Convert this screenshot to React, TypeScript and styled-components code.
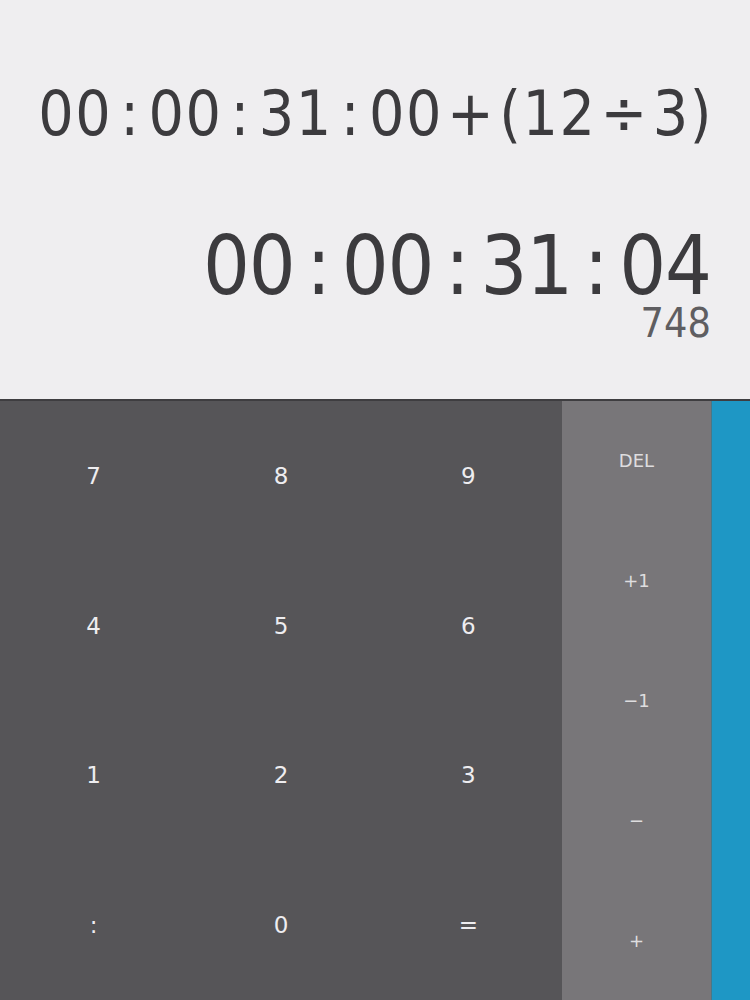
import React from "react";
import styled, { createGlobalStyle } from "styled-components";

const GlobalStyle = createGlobalStyle`
  html, body {
    margin: 0;
    padding: 0;
    background: #efeef0;
  }
  * {
    box-sizing: border-box;
  }
`;

const digitKeys = ["7", "8", "9", "4", "5", "6", "1", "2", "3", ":", "0", "="];
const opKeys = ["DEL", "+1", "\u22121", "\u2212", "+"];

// separators (colons, operators) get extra room on both sides
const renderLine = (text: string, colonGap: number, opGap: number) =>
  text.split("").map((ch, i) => {
    if (ch === ":") return <Sep key={i} $gap={colonGap}>:</Sep>;
    if (ch === "+" || ch === "÷") return <Sep key={i} $gap={opGap}>{ch}</Sep>;
    return <React.Fragment key={i}>{ch}</React.Fragment>;
  });

const App: React.FC = () => {
  return (
    <Page>
      <GlobalStyle />
      <Display>
        <Expression>{renderLine("00:00:31:00+(12÷3)", 8, 4)}</Expression>
        <Result>{renderLine("00:00:31:04", 11.5, 0)}</Result>
        <Frames>748</Frames>
      </Display>
      <Keypad>
        <DigitGrid>
          {digitKeys.map((k) => (
            <DigitKey key={k}>{k}</DigitKey>
          ))}
        </DigitGrid>
        <OpColumn>
          {opKeys.map((k) => (
            <OpKey key={k}>{k}</OpKey>
          ))}
        </OpColumn>
        <Drawer />
      </Keypad>
    </Page>
  );
};

const Page = styled.div`
  width: 750px;
  height: 1000px;
  display: flex;
  flex-direction: column;
  overflow: hidden;
`;

const Display = styled.div`
  height: 401px;
  flex-shrink: 0;
  background: #efeef0;
  border-bottom: 2px solid #3e3d40;
  display: flex;
  flex-direction: column;
  align-items: flex-end;
  padding: 83px 39px 0 0;
  font-family: "DejaVu Sans Condensed", "DejaVu Sans", sans-serif;
  color: #3c3b3e;
`;

const Expression = styled.div`
  font-size: 62px;
  line-height: 1;
  letter-spacing: 1.5px;
  margin-right: -2px;
  white-space: nowrap;
`;

const Sep = styled.span<{ $gap: number }>`
  margin: 0 ${(p) => p.$gap}px;
`;

const Result = styled.div`
  font-size: 82px;
  line-height: 1;
  letter-spacing: -1px;
  margin-top: 80px;
  white-space: nowrap;
`;

const Frames = styled.div`
  font-size: 41px;
  line-height: 0.8;
  color: #5f5e61;
`;

const Keypad = styled.div`
  flex: 1;
  display: flex;
  font-family: "DejaVu Sans", sans-serif;
`;

const DigitGrid = styled.div`
  width: 562px;
  background: #565558;
  display: grid;
  grid-template-columns: repeat(3, 1fr);
  grid-template-rows: repeat(4, 1fr);
`;

const DigitKey = styled.div`
  display: flex;
  align-items: center;
  justify-content: center;
  color: #eeedf0;
  font-size: 23px;
`;

const OpColumn = styled.div`
  width: 149px;
  background: #787679;
  display: grid;
  grid-template-rows: repeat(5, 1fr);
`;

const OpKey = styled.div`
  display: flex;
  align-items: center;
  justify-content: center;
  color: #dedddf;
  font-size: 18px;
`;

const Drawer = styled.div`
  flex: 1;
  background: #1e97c5;
  border-left: 1px solid #4a7786;
`;

export default App;
